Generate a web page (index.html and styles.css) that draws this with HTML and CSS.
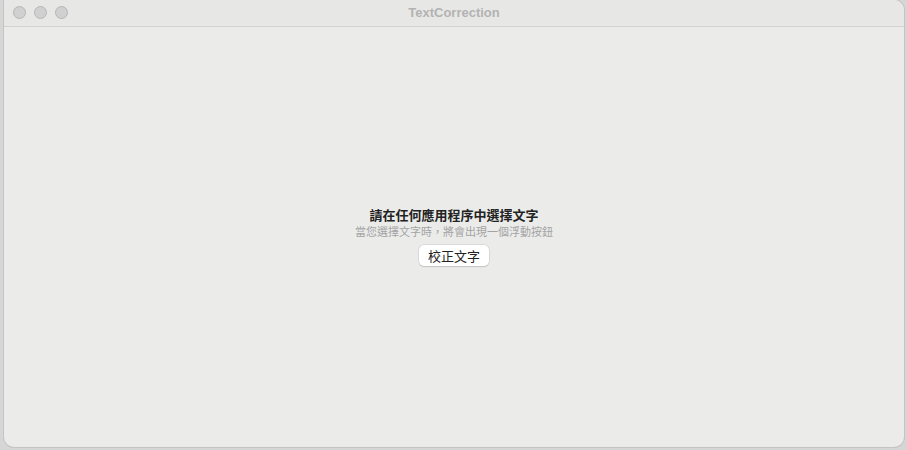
FILE: index.html
```html
<!DOCTYPE html>
<html lang="zh-Hant">
<head>
<meta charset="utf-8">
<title>TextCorrection</title>
<link rel="stylesheet" href="styles.css">
</head>
<body>
<div class="window">
  <div class="titlebar">
    <div class="lights">
      <span class="light"></span>
      <span class="light"></span>
      <span class="light"></span>
    </div>
    <div class="title">TextCorrection</div>
  </div>
  <div class="content">
    <div class="heading">請在任何應用程序中選擇文字</div>
    <div class="sub">當您選擇文字時，將會出現一個浮動按鈕</div>
    <button class="btn">校正文字</button>
  </div>
</div>
</body>
</html>
```
FILE: styles.css
```css
html, body {
  margin: 0;
  padding: 0;
  height: 100%;
}
body {
  background: #d6d6d6;
  font-family: "Noto Sans CJK TC", "Liberation Sans", sans-serif;
  padding: 0 3px 3px 4px;
  box-sizing: border-box;
  overflow: hidden;
}
.window {
  height: 447px;
  background: #ebecea;
  border-radius: 0 10px 10px 10px;
  box-shadow: 0 0 0 1px #c4c4c4;
  display: flex;
  flex-direction: column;
  overflow: hidden;
}
.titlebar {
  height: 26px;
  flex: none;
  background: #e7e7e6;
  border-bottom: 1px solid #d2d2d2;
  position: relative;
  display: flex;
  align-items: center;
  justify-content: center;
}
.lights {
  position: absolute;
  left: 9px;
  top: 6px;
  display: flex;
  gap: 8px;
}
.light {
  width: 11px;
  height: 11px;
  border-radius: 50%;
  background: #d0d0d0;
  border: 0.5px solid #b6b6b6;
}
.title {
  font-family: "Liberation Sans", "Inter", sans-serif;
  font-weight: bold;
  font-size: 13px;
  color: #b3b3b3;
  margin-top: -2px;
}
.content {
  flex: 1;
  display: flex;
  flex-direction: column;
  align-items: center;
  justify-content: center;
  padding-bottom: 2px;
}
.heading {
  font-size: 13px;
  font-weight: bold;
  color: #222;
  line-height: 16px;
}
.sub {
  font-size: 11px;
  color: #a3a3a3;
  line-height: 14px;
  margin-top: 1px;
}
.btn {
  margin-top: 7px;
  font-family: "Noto Sans CJK TC", sans-serif;
  font-size: 13px;
  color: #222;
  background: #ffffff;
  border: none;
  border-radius: 5px;
  box-shadow: 0 0 0 0.5px #c8c8c8, 0 1px 1px rgba(0,0,0,0.18);
  padding: 0 9px;
  height: 21px;
  line-height: 21px;
}
```
